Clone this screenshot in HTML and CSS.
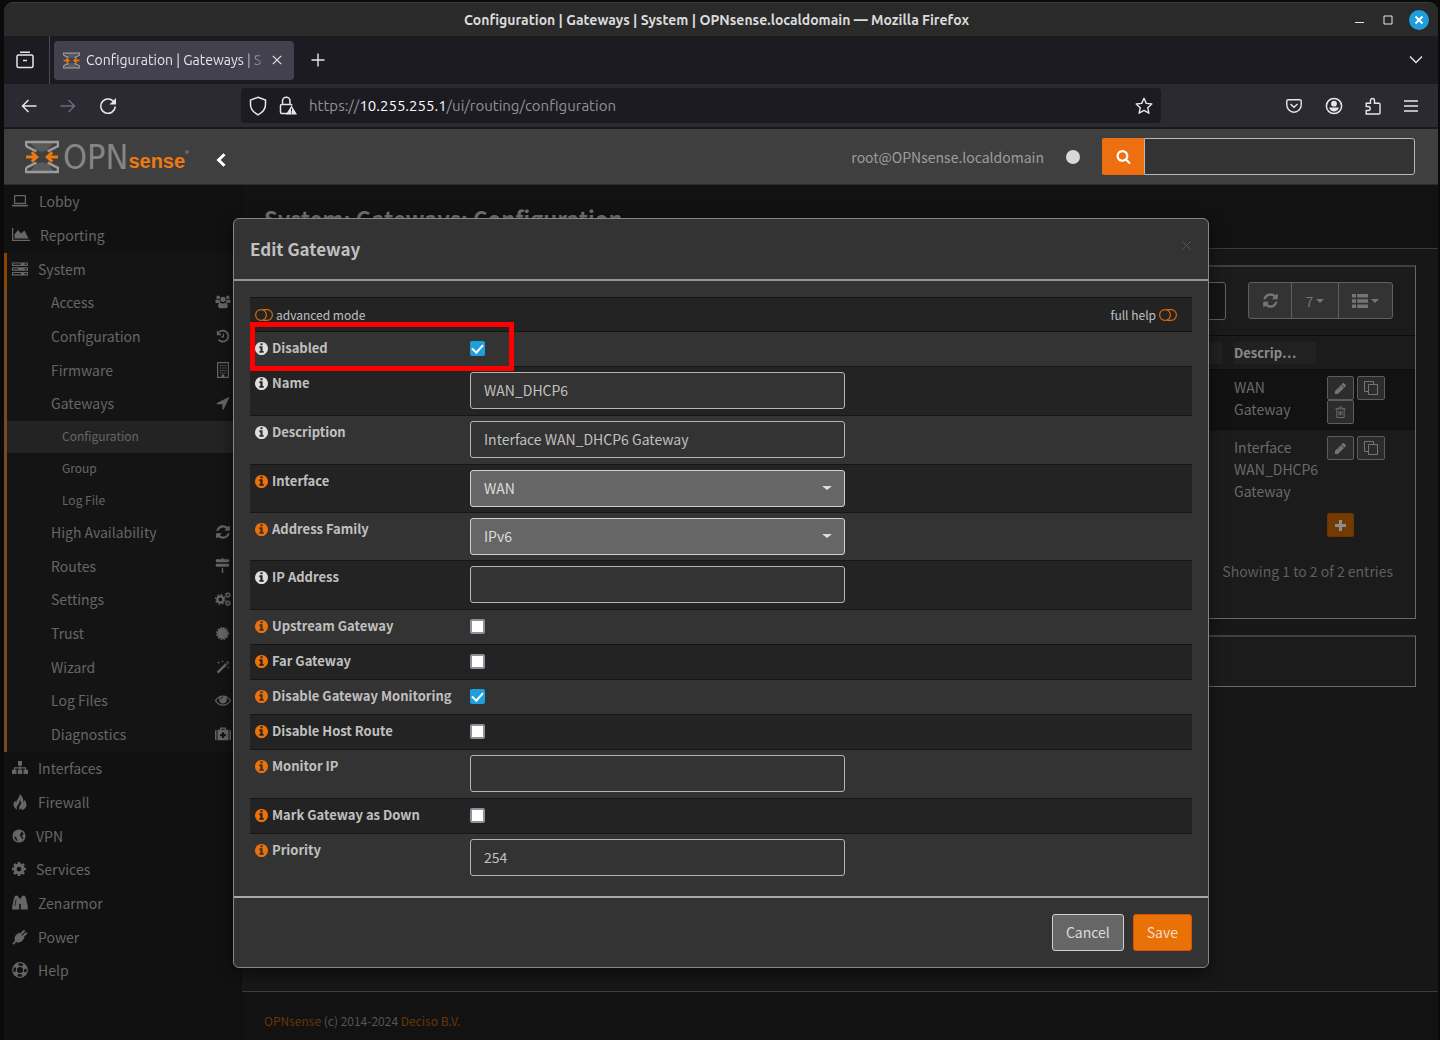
FILE: index.html
```html
<!DOCTYPE html>
<html lang="en">
<head>
<meta charset="utf-8">
<meta name="viewport" content="width=device-width, initial-scale=1">
<title>Configuration | Gateways | System | OPNsense.localdomain</title>
<link rel="stylesheet" href="styles.css">
</head>
<body>
<svg class="sprite" aria-hidden="true">
  <symbol id="i-refresh" viewBox="0 0 1792 1792"><path d="M1639 1056q0 5-1 7-64 268-268 434.5t-478 166.5q-146 0-282.5-55t-243.5-157l-129 129q-19 19-45 19t-45-19-19-45v-448q0-26 19-45t45-19h448q26 0 45 19t19 45-19 45l-137 137q71 66 161 102t187 36q134 0 250-65t186-179q11-17 53-117 8-23 30-23h192q13 0 22.5 9.5t9.5 22.5zm25-800v448q0 26-19 45t-45 19h-448q-26 0-45-19t-19-45 19-45l138-138q-148-137-349-137-134 0-250 65t-186 179q-11 17-53 117-8 23-30 23h-199q-13 0-22.5-9.5t-9.5-22.5v-7q65-268 270-434.5t480-166.5q146 0 284 55.5t245 156.5l130-129q19-19 45-19t45 19 19 45z"/></symbol>
  <symbol id="i-info" viewBox="128 128 1536 1536"><path d="M1152 1376v-160q0-14-9-23t-23-9h-96v-512q0-14-9-23t-23-9h-320q-14 0-23 9t-9 23v160q0 14 9 23t23 9h96v320h-96q-14 0-23 9t-9 23v160q0 14 9 23t23 9h448q14 0 23-9t9-23zm-128-896v-160q0-14-9-23t-23-9h-192q-14 0-23 9t-9 23v160q0 14 9 23t23 9h192q14 0 23-9t9-23zm640 416q0 209-103 385.5t-279.5 279.5-385.5 103-385.5-103-279.5-279.5-103-385.5 103-385.5 279.5-279.5 385.5-103 385.5 103 279.5 279.5 103 385.5z"/></symbol>
  <symbol id="i-arrow" viewBox="0 0 1792 1792"><path d="M1593 349l-640 1280q-17 35-57 35-5 0-15-2-22-5-35.5-22.5t-13.5-39.5v-576h-576q-22 0-39.5-13.5t-22.5-35.5 4-42 29-30l1280-640q13-7 29-7 27 0 45 19 15 14 18.5 34.5t-6.5 39.5z"/></symbol>
  <symbol id="i-search" viewBox="0 0 1792 1792"><path d="M1216 832q0-185-131.5-316.5t-316.5-131.5-316.5 131.5-131.5 316.5 131.5 316.5 316.5 131.5 316.5-131.5 131.5-316.5zm512 832q0 52-38 90t-90 38q-54 0-90-38l-343-342q-179 124-399 124-143 0-273.5-55.5t-225-150-150-225-55.5-273.5 55.5-273.5 150-225 225-150 273.5-55.5 273.5 55.5 225 150 150 225 55.5 273.5q0 220-124 399l343 343q37 37 37 90z"/></symbol>
  <symbol id="i-cog" viewBox="128 128 1536 1536"><path d="M1152 896q0-106-75-181t-181-75-181 75-75 181 75 181 181 75 181-75 75-181zm512-109v222q0 12-8 23t-20 13l-185 28q-19 54-39 91 35 50 107 138 10 12 10 25t-9 23q-27 37-99 108t-94 71q-12 0-26-9l-138-108q-44 23-91 38-16 136-29 186-7 28-36 28h-222q-14 0-24.5-8.5t-11.5-21.5l-28-184q-49-16-90-37l-141 107q-10 9-25 9-14 0-25-11-126-114-165-168-7-10-7-23 0-12 8-23 15-21 51-66.5t54-70.5q-27-50-41-99l-183-27q-13-2-21-12.5t-8-23.5v-222q0-12 8-23t19-13l186-28q14-46 39-92-40-57-107-138-10-12-10-24 0-10 9-23 26-36 98.5-107.5t94.5-71.5q13 0 26 10l138 107q44-23 91-38 16-136 29-186 7-28 36-28h222q14 0 24.5 8.5t11.5 21.5l28 184q49 16 90 37l142-107q9-9 24-9 13 0 25 10 129 119 165 170 7 8 7 22 0 12-8 23-15 21-51 66.5t-54 70.5q26 50 41 98l183 28q13 2 21 12.5t8 23.5z"/></symbol>
  <symbol id="i-eye" viewBox="0 0 1792 1792"><path d="M1664 960q-152-236-381-353 61 104 61 225 0 185-131.5 316.5t-316.5 131.5-316.5-131.5-131.5-316.5q0-121 61-225-229 117-381 353 133 205 333.5 326.5t434.5 121.5 434.5-121.5 333.5-326.5zm-720-384q0-20-14-34t-34-14q-125 0-214.5 89.5t-89.5 214.5q0 20 14 34t34 14 34-14 14-34q0-86 61-147t147-61q20 0 34-14t14-34zm848 384q0 34-20 69-140 230-376.5 368.5t-499.5 138.5-499.5-139-376.5-368q-20-35-20-69t20-69q140-229 376.5-368t499.5-139 499.5 139 376.5 368q20 35 20 69z"/></symbol>
  <symbol id="i-pencil" viewBox="0 0 1792 1792"><path d="M960 416l416 416-832 832h-416v-416zm683 96q0 53-37 90l-166 166-416-416 166-165q36-38 90-38 53 0 91 38l235 234q37 39 37 91z"/><path d="M910 640 480 1070" stroke="#2c2c2c" stroke-width="60"/></symbol>
  <symbol id="i-laptop" viewBox="0 0 16 16"><path d="M3 2h10a1 1 0 0 1 1 1v8H2V3a1 1 0 0 1 1-1zm.2 1.2v6.6h9.6V3.200zM0 11.800h16v.8q0 1-1.200 1H1.200q-1.200 0-1.200-1z" fill-rule="evenodd"/></symbol>
  <symbol id="i-chart" viewBox="0 0 18 16"><path d="M0 1h1.300v11.700H18V14H0zM2.500 11.500V7.300L6 3l3 3.500 3.500-3 4 8z"/></symbol>
  <symbol id="i-server" viewBox="0 0 16 16"><path d="M0 1.500h16v3.600H0zm1 1.100v1.200h8V2.600zm11.500 0v1.200H15V2.600zM0 6.200h16v3.600H0zm1 1.200v1.200h5V7.400zm11.500 0v1.200H15V7.400zM0 10.900h16v3.600H0zm1 1.200v1.200h8v-1.200zm11.500 0v1.200H15v-1.200z" fill-rule="evenodd"/></symbol>
  <symbol id="i-users" viewBox="0 0 18 16"><circle cx="3.600" cy="2.800" r="2"/><circle cx="14.400" cy="2.800" r="2"/><circle cx="9" cy="5" r="3"/><path d="M.5 9V6.500Q.7 5 2 5.200q2 1 3.200.3Q5.200 7 6 8.300 4.500 8.200 3.800 9zM17.500 9V6.500q-.2-1.500-1.500-1.300-2 1-3.200.3Q12.800 7 12 8.300q1.500-.1 2.200.7zM5.500 8.600Q9 10.800 12.500 8.600q1.800.3 2 4 0 2.400-2 2.400h-7q-2 0-2-2.400.2-3.700 2-4z"/></symbol>
  <symbol id="i-history" viewBox="0 0 16 16"><path d="M3.400 3.600A6.300 6.300 0 1 1 3 12.200" fill="none" stroke="currentColor" stroke-width="2"/><path d="M1 1.500V7h5.500z"/><path d="M8.500 5v4H6" fill="none" stroke="currentColor" stroke-width="1.200"/></symbol>
  <symbol id="i-building" viewBox="0 0 16 16"><path d="M2.600.6h10.800v14.800H2.600z" fill="none" stroke="currentColor" stroke-width="1.200"/><path d="M4.800 3.500h6.800M4.800 6h6.800M4.800 8.500h6.800M4.800 11h6.800" stroke="currentColor" stroke-width="1.200" stroke-dasharray="1.200 .6"/><path d="M6.600 12.500h2.800V15H6.600z"/></symbol>
  <symbol id="i-signs" viewBox="0 0 16 16"><path d="M7.200 0h1.600v1.300h5.400l1.500 1.500-1.500 1.700H1V1.300h6.200zM1.800 6H15v3.200H1.800L.3 7.600zM7.200 10.500h1.600V16H7.200z"/></symbol>
  <symbol id="i-cogs" viewBox="0 0 18 16"><circle cx="6" cy="8.500" r="3.400" fill="none" stroke="currentColor" stroke-width="2.600"/><circle cx="6" cy="8.500" r="5.300" fill="none" stroke="currentColor" stroke-width="1.600" stroke-dasharray="2.080 2.080"/><circle cx="14.500" cy="3.500" r="2" fill="none" stroke="currentColor" stroke-width="1.600"/><circle cx="14.500" cy="3.500" r="3" fill="none" stroke="currentColor" stroke-dasharray="1.600 1.540"/><circle cx="14.500" cy="12.800" r="2" fill="none" stroke="currentColor" stroke-width="1.600"/><circle cx="14.500" cy="12.800" r="3" fill="none" stroke="currentColor" stroke-dasharray="1.600 1.540"/></symbol>
  <symbol id="i-cert" viewBox="0 0 16 16"><circle cx="8" cy="8" r="5.800"/><circle cx="8" cy="8" r="6.200" fill="none" stroke="currentColor" stroke-width="1.400" stroke-dasharray="1.900 1.346"/></symbol>
  <symbol id="i-wand" viewBox="0 0 16 16"><path d="M.8 13.400 13.200 1l2 2L2.800 15.400zM10.800 4.700l.8.800L13.800 3.200l-.7-.8z" fill-rule="evenodd"/><path d="M3 1l.5 1.500L5 3l-1.500.5L3 5l-.5-1.500L1 3l1.500-.5zM7.500 0l.4 1.100L9 1.500l-1.100.4L7.500 3l-.4-1.100L6 1.500l1.100-.4zM14 7l.4 1.100 1.100.4-1.100.4L14 10l-.4-1.100-1.100-.4 1.100-.4z"/></symbol>
  <symbol id="i-medkit" viewBox="0 0 18 16"><path d="M0 5q0-1.700 1.700-1.700V15Q0 15 0 13.300zM18 5q0-1.700-1.700-1.700V15q1.700 0 1.700-1.700zM2.800 3.300h2.700V1.700q0-1 1-1h5q1 0 1 1v1.600h2.700V15H2.800zM7 2.200v1.100h4V2.200zm.8 3.800v2.100H5.700v2.400h2.100v2.100h2.400v-2.100h2.100V8.100h-2.100V6z" fill-rule="evenodd"/></symbol>
  <symbol id="i-sitemap" viewBox="0 0 16 16"><path d="M6 1h4v4.500H8.600v1.700h5.500v2.600H16V14h-4.500V9.800h1.400V8.400H8.600v1.400h1.600V14H5.800V9.800h1.600V8.400H3.100v1.400h1.400V14H0V9.800h1.900V7.200h5.500V5.500H6z"/></symbol>
  <symbol id="i-fire" viewBox="0 0 16 16"><path d="M7.500 0q.7 2.600-1.500 4.800-2 2.200-1.700 4Q3.500 8.500 3.300 6.500.8 9 1.500 11.500 2.300 14.500 5.500 16q-1.800-2.400.2-4.700Q8.300 8.200 7.300 6q3.500 2.200.3 6-1.500 2.400.2 4 .6-1.200 1.500-1.800.2 1 .3 1.800 4.500-.8 4.900-5 .2-3-2.300-5.500.2 2-.8 2.800Q11.500 2.500 7.500 0z"/></symbol>
  <symbol id="i-globe" viewBox="0 0 16 16"><path d="M8 .5a7.500 7.500 0 1 0 0 15 7.500 7.500 0 0 0 0-15zM10.700 3l1.800 1.200 1.200 2.300-1.200-.3-1 1 .4 2 1.300.6-1.500 2-1-2.500-1.700-2L9.800 5.200zM2.500 8l2.300 1.500 1 2.500.9 2Q3 12.500 2.500 8z" fill-rule="evenodd"/></symbol>
  <symbol id="i-binoc" viewBox="0 0 16 16"><path d="M2.800.8h3.400v1.700h1V14.500H.2v-3L2.200 2.500h.6zM9.800.8h3.400v1.700h.6l2 9v3H8.800V2.500h1zM3.800 4.200 2.400 11h.8L4.500 4.200z" fill-rule="evenodd"/><path d="M7 3.500h2V9H7z"/></symbol>
  <symbol id="i-plug" viewBox="0 0 16 16"><path d="M5 5l6 6q-3 3.700-6.700 2L1.500 15.800.2 14.500 3 11.700Q1.500 8 5 5zM6 4.500l1-.8 5.300 5.300-.8 1z"/><path d="M8.500 5.500 12 2M10.700 7.700l3.500-3.500" stroke="currentColor" stroke-width="2" stroke-linecap="round"/><path d="M5 5l2-1 5 5-1 2-3 1z"/></symbol>
  <symbol id="i-ring" viewBox="0 0 16 16"><circle cx="8" cy="8" r="7.300" fill="none" stroke="currentColor" stroke-width="1.200"/><circle cx="8" cy="8" r="3.600" fill="none" stroke="currentColor" stroke-width="1.200"/><circle cx="8" cy="8" r="5.500" fill="none" stroke="currentColor" stroke-width="3.400" stroke-dasharray="4.320 4.320" stroke-dashoffset="6.480"/></symbol>
  <symbol id="i-list" viewBox="0 0 16 14"><path d="M0 0h4v3.600H0zM5.200 0H16v3.600H5.200zM0 5.200h4v3.600H0zM5.200 5.200H16v3.600H5.200zM0 10.400h4V14H0zM5.200 10.400H16V14H5.200z"/></symbol>
  <symbol id="i-caret" viewBox="0 0 8 4"><path d="M0 0h8L4 4z"/></symbol>
  <symbol id="i-copy" viewBox="0 0 14 14"><path d="M4.500 3.500h9v10h-9zM4.500 10.500h-4v-10h9v3" fill="none" stroke="currentColor"/></symbol>
  <symbol id="i-trash" viewBox="0 0 12 14"><path d="M.5 3h11M4 3l.7-2h2.600L8 3M2 3v9.500h8V3M4.300 5.500V10M6 5.500V10M7.700 5.500V10" fill="none" stroke="currentColor"/></symbol>
  <symbol id="i-toggle" viewBox="0 0 18 12"><circle cx="6" cy="6" r="5.400" fill="none" stroke="currentColor" stroke-width="1.200"/><path d="M8 .6h4a5.400 5.400 0 0 1 0 10.800H8" fill="none" stroke="currentColor" stroke-width="1.200"/></symbol>
  <symbol id="i-mark" viewBox="0 0 33 33"><path d="M5 3h23L22 9q-5.500 5-11 0z" fill="#5a5a5a"/><path d="M10 24q6.500-5 13 0l5 6H5z" fill="#5a5a5a"/><path d="M1 6V2h31v4L22 11M1 6l10 5M1 27v4h31v-4l-10-5M1 27l10-5" fill="none" stroke="#9b9b9b" stroke-width="2.400"/><path d="M1 16.500h9M6.500 12l5 4.500-5 4.500M32 16.500h-9M26.500 12l-5 4.500 5 4.500" fill="none" stroke="#f0780f" stroke-width="2.800"/></symbol>
</svg>

<div class="window">
  <header class="titlebar">
    <h1 class="titlebar-text">Configuration | Gateways | System | OPNsense.localdomain — Mozilla Firefox</h1>
    <div class="window-buttons">
      <button class="chrome-btn win-btn" aria-label="Minimize"><svg width="10" height="10" viewBox="0 0 10 10"><path d="M1 7.500h9" stroke="currentColor"/></svg></button>
      <button class="chrome-btn win-btn" aria-label="Maximize"><svg width="10" height="10" viewBox="0 0 10 10"><path d="M1 1h8v8H1z" fill="none" stroke="currentColor"/></svg></button>
      <button class="chrome-btn win-close" aria-label="Close"><svg width="10" height="10" viewBox="0 0 10 10"><path d="M1.500 1.500l7 7M8.500 1.500l-7 7" stroke="currentColor" stroke-width="2"/></svg></button>
    </div>
  </header>

  <div class="tabbar">
    <button class="chrome-btn view-btn" aria-label="Firefox View"><svg width="18" height="18" viewBox="0 0 18 18" fill="none" stroke="currentColor" stroke-width="1.500"><path d="M4 1.200h10M2.500 4h13q1.500 0 1.500 1.500V15q0 1.500-1.500 1.500h-13Q1 16.500 1 15V5.500Q1 4 2.500 4zM7 9.500h4"/></svg></button>
    <div class="tab">
      <svg class="tab-icon" width="17" height="17"><use href="#i-mark"/></svg>
      <span class="tab-label">Configuration | Gateways | S</span>
      <button class="chrome-btn tab-close" aria-label="Close tab"><svg width="10" height="10" viewBox="0 0 10 10"><path d="M.8.8l8.400 8.400M9.200.8.8 9.200" stroke="currentColor" stroke-width="1.200"/></svg></button>
    </div>
    <button class="chrome-btn" aria-label="New tab"><svg width="14" height="14" viewBox="0 0 14 14"><path d="M7 .5v13M.5 7h13" stroke="currentColor" stroke-width="1.400"/></svg></button>
    <button class="chrome-btn tabs-menu" aria-label="List all tabs"><svg width="14" height="10" viewBox="0 0 14 10"><path d="M1 1.500l6 6 6-6" fill="none" stroke="currentColor" stroke-width="1.400"/></svg></button>
  </div>

  <div class="navbar">
    <div class="nav-left">
      <button class="chrome-btn" aria-label="Back"><svg width="16" height="14" viewBox="0 0 16 14"><path d="M15.500 7H1.500M7.500 1l-6 6 6 6" fill="none" stroke="currentColor" stroke-width="1.500"/></svg></button>
      <button class="chrome-btn is-off" aria-label="Forward"><svg width="16" height="14" viewBox="0 0 16 14"><path d="M.5 7h14M8.500 1l6 6-6 6" fill="none" stroke="currentColor" stroke-width="1.500"/></svg></button>
      <button class="chrome-btn" aria-label="Reload"><svg width="18" height="18" viewBox="0 0 18 18"><path d="M15.500 6A7.200 7.200 0 1 0 16.200 9.500" fill="none" stroke="currentColor" stroke-width="1.500"/><path d="M17 1v6.500h-6.500z" fill="currentColor"/></svg></button>
    </div>
    <div class="urlbar">
      <svg width="18" height="20" viewBox="0 0 18 20"><path d="M9 1.200 16.500 4v4.500q0 6.500-7.500 10.300Q1.500 15 1.500 8.500V4z" fill="none" stroke="currentColor" stroke-width="1.500"/></svg>
      <svg width="18" height="20" viewBox="0 0 18 20"><path d="M9 17.500H2.800Q1.500 17.500 1.500 16V9.500q0-1 1.300-1h9q1.200 0 1.200 1M3.500 8.500V5a3.700 3.700 0 0 1 7.500 0v3.500" fill="none" stroke="currentColor" stroke-width="1.500"/><path d="M12.500 9.500 18 18.500H7z" fill="currentColor"/><path d="M12.500 12.500v3M12.500 16.500v1" stroke="#1c1b22"/></svg>
      <p class="url">https://<span class="url-host">10.255.255.1</span>/ui/routing/configuration</p>
      <svg width="18" height="18" viewBox="0 0 18 18"><path d="M9 1.300l2.300 5.100 5.500.6-4.100 3.700 1.200 5.500L9 13.400l-4.900 2.800 1.200-5.500L1.200 7l5.500-.6z" fill="none" stroke="currentColor" stroke-width="1.400" stroke-linejoin="round"/></svg>
    </div>
    <div class="nav-right">
      <button class="chrome-btn" aria-label="Pocket"><svg width="16" height="16" viewBox="0 0 16 16" fill="none" stroke="currentColor" stroke-width="1.400"><path d="M2.200 1.700h11.600q1.400 0 1.400 1.300v4a7.200 7.200 0 0 1-14.400 0V3q0-1.300 1.400-1.300zM4.500 6 8 9.300 11.500 6"/></svg></button>
      <button class="chrome-btn" aria-label="Account"><svg width="18" height="18" viewBox="0 0 18 18"><circle cx="9" cy="9" r="7.600" fill="none" stroke="currentColor" stroke-width="1.500"/><circle cx="9" cy="6.700" r="2.900" fill="currentColor"/><path d="M4 10.500h10q-1.500 4-5 4t-5-4z" fill="currentColor"/></svg></button>
      <button class="chrome-btn" aria-label="Extensions"><svg width="16" height="18" viewBox="0 0 16 18"><path d="M1.200 9V6.200h4.300V3.500a2 2 0 0 1 4 0v2.700H14q1 0 1 1V16q0 1-1 1H1.200v-3.500h2a2 2 0 0 0 0-4h-2z" fill="none" stroke="currentColor" stroke-width="1.400"/></svg></button>
      <button class="chrome-btn" aria-label="Menu"><svg width="14" height="12" viewBox="0 0 14 12"><path d="M0 1h14M0 6h14M0 11h14" stroke="currentColor" stroke-width="1.400"/></svg></button>
    </div>
  </div>

  <div class="page">
    <header class="topbar">
      <a class="brand" href="#" aria-label="OPNsense"><svg width="34" height="34"><use href="#i-mark"/></svg><span class="brand-opn">OPN</span><span class="brand-sense">sense</span><span class="brand-dot"></span></a>
      <button class="collapse" aria-label="Collapse menu"><svg width="10" height="14" viewBox="0 0 10 14"><path d="M8.500 1.200 2.600 7l5.900 5.800" fill="none" stroke="currentColor" stroke-width="3"/></svg></button>
      <span class="user">root@OPNsense.localdomain</span>
      <span class="status"></span>
      <form class="topsearch">
        <button class="topsearch-btn" type="button" aria-label="Search"><svg class="ico" width="15" height="15"><use href="#i-search"/></svg></button>
        <input class="topsearch-input" type="text" aria-label="Search menu">
      </form>
    </header>

    <div class="body">
      <nav class="sidebar">
        <ul class="menu">
          <li><a class="item" href="#"><svg class="ico" width="16" height="16"><use href="#i-laptop"/></svg><span class="gap-l">Lobby</span></a></li>
          <li><a class="item" href="#"><svg class="ico" width="18" height="16"><use href="#i-chart"/></svg>Reporting</a></li>
          <li class="open"><a class="item item-open" href="#"><svg class="ico" width="16" height="16"><use href="#i-server"/></svg>System</a>
            <ul class="submenu">
              <li><a class="item" href="#">Access<svg class="ico" width="16" height="16"><use href="#i-users"/></svg></a></li>
              <li><a class="item" href="#">Configuration<svg class="ico" width="14" height="14"><use href="#i-history"/></svg></a></li>
              <li><a class="item" href="#">Firmware<svg class="ico" width="16" height="16"><use href="#i-building"/></svg></a></li>
              <li><a class="item" href="#">Gateways<svg class="ico" width="16" height="16"><use href="#i-arrow"/></svg></a>
                <ul class="leafmenu">
                  <li><a class="item leaf leaf-active" href="#">Configuration</a></li>
                  <li><a class="item leaf" href="#">Group</a></li>
                  <li><a class="item leaf" href="#">Log File</a></li>
                </ul>
              </li>
              <li><a class="item" href="#">High Availability<svg class="ico" width="16" height="16"><use href="#i-refresh"/></svg></a></li>
              <li><a class="item" href="#">Routes<svg class="ico" width="15" height="15"><use href="#i-signs"/></svg></a></li>
              <li><a class="item" href="#">Settings<svg class="ico" width="16" height="16"><use href="#i-cogs"/></svg></a></li>
              <li><a class="item" href="#">Trust<svg class="ico" width="15" height="15"><use href="#i-cert"/></svg></a></li>
              <li><a class="item" href="#">Wizard<svg class="ico" width="14" height="14"><use href="#i-wand"/></svg></a></li>
              <li><a class="item" href="#">Log Files<svg class="ico" width="16" height="16"><use href="#i-eye"/></svg></a></li>
              <li><a class="item" href="#">Diagnostics<svg class="ico" width="16" height="16"><use href="#i-medkit"/></svg></a></li>
            </ul>
          </li>
          <li><a class="item" href="#"><svg class="ico" width="16" height="16"><use href="#i-sitemap"/></svg>Interfaces</a></li>
          <li><a class="item" href="#"><svg class="ico" width="16" height="16"><use href="#i-fire"/></svg>Firewall</a></li>
          <li><a class="item" href="#"><svg class="ico" width="14" height="14"><use href="#i-globe"/></svg>VPN</a></li>
          <li><a class="item" href="#"><svg class="ico" width="14" height="14"><use href="#i-cog"/></svg>Services</a></li>
          <li><a class="item" href="#"><svg class="ico" width="16" height="16"><use href="#i-binoc"/></svg>Zenarmor</a></li>
          <li><a class="item" href="#"><svg class="ico" width="16" height="16"><use href="#i-plug"/></svg>Power</a></li>
          <li><a class="item" href="#"><svg class="ico" width="16" height="16"><use href="#i-ring"/></svg>Help</a></li>
        </ul>
      </nav>

      <main class="main">
        <div class="page-head"><h2 class="page-title">System: Gateways: Configuration</h2></div>
        <section class="panel">
          <div class="toolbar">
            <input class="grid-search" type="text" aria-label="Search gateways">
            <div class="btn-group">
              <button class="tool" aria-label="Refresh"><svg class="ico" width="17" height="17"><use href="#i-refresh"/></svg></button>
              <button class="tool">7<svg class="ico" width="8" height="4"><use href="#i-caret"/></svg></button>
              <button class="tool" aria-label="Columns"><svg class="ico" width="16" height="14"><use href="#i-list"/></svg><svg class="ico" width="8" height="4"><use href="#i-caret"/></svg></button>
            </div>
          </div>
          <table class="grid">
            <thead><tr><th class="c-rest"><span class="chip"></span></th><th class="c-desc"><span class="chip">Descrip…</span></th><th class="c-cmd"></th></tr></thead>
            <tbody>
              <tr class="dark"><td></td><td>WAN Gateway</td><td><div class="cmds">
                <button class="cmd" aria-label="Edit"><svg class="ico" width="13" height="13"><use href="#i-pencil"/></svg></button><button class="cmd" aria-label="Clone"><svg class="ico" width="14" height="14"><use href="#i-copy"/></svg></button><button class="cmd" aria-label="Delete"><svg class="ico" width="11" height="13"><use href="#i-trash"/></svg></button></div></td></tr>
              <tr><td></td><td>Interface WAN_DHCP6 Gateway</td><td><div class="cmds">
                <button class="cmd" aria-label="Edit"><svg class="ico" width="13" height="13"><use href="#i-pencil"/></svg></button><button class="cmd" aria-label="Clone"><svg class="ico" width="14" height="14"><use href="#i-copy"/></svg></button></div></td></tr>
              <tr class="add-row"><td></td><td></td><td><button class="cmd cmd-add" aria-label="Add"><svg width="11" height="11" viewBox="0 0 11 11"><path d="M5.500 0v11M0 5.500h11" stroke="currentColor" stroke-width="3"/></svg></button></td></tr>
            </tbody>
          </table>
          <p class="count">Showing 1 to 2 of 2 entries</p>
        </section>
        <section class="panel panel-empty"></section>
        <footer class="foot"><a href="#">OPNsense</a> (c) 2014-2024 <a href="#">Deciso B.V.</a></footer>
      </main>
    </div>

    <div class="overlay">
      <form class="modal" role="dialog" aria-label="Edit Gateway">
        <div class="modal-head"><h3 class="modal-title">Edit Gateway</h3><button class="modal-x" type="button" aria-label="Close"><svg width="9" height="9" viewBox="0 0 9 9"><path d="M.5.5l8 8M8.500.5l-8 8" stroke="currentColor"/></svg></button></div>
        <div class="modal-body">
          <div class="row row-top"><span class="mode"><svg class="tog" width="18" height="12"><use href="#i-toggle"/></svg>advanced mode</span><span class="mode">full help<svg class="tog" width="18" height="12"><use href="#i-toggle"/></svg></span></div>
          <div class="row row-check"><label class="lbl" for="f1"><svg class="ico" width="13" height="13"><use href="#i-info"/></svg>Disabled</label><input class="check" id="f1" type="checkbox" checked><span class="highlight"></span></div>
          <div class="row"><label class="lbl" for="f2"><svg class="ico" width="13" height="13"><use href="#i-info"/></svg>Name</label><input class="field" id="f2" type="text" value="WAN_DHCP6"></div>
          <div class="row"><label class="lbl" for="f3"><svg class="ico" width="13" height="13"><use href="#i-info"/></svg>Description</label><input class="field" id="f3" type="text" value="Interface WAN_DHCP6 Gateway"></div>
          <div class="row row-pick"><label class="lbl adv" for="f4"><svg class="ico" width="13" height="13"><use href="#i-info"/></svg>Interface</label><span class="pick"><select class="field" id="f4"><option>WAN</option></select></span></div>
          <div class="row row-pick"><label class="lbl adv" for="f5"><svg class="ico" width="13" height="13"><use href="#i-info"/></svg>Address Family</label><span class="pick"><select class="field" id="f5"><option>IPv6</option></select></span></div>
          <div class="row"><label class="lbl" for="f6"><svg class="ico" width="13" height="13"><use href="#i-info"/></svg>IP Address</label><input class="field" id="f6" type="text"></div>
          <div class="row row-check"><label class="lbl adv" for="f7"><svg class="ico" width="13" height="13"><use href="#i-info"/></svg>Upstream Gateway</label><input class="check" id="f7" type="checkbox"></div>
          <div class="row row-check"><label class="lbl adv" for="f8"><svg class="ico" width="13" height="13"><use href="#i-info"/></svg>Far Gateway</label><input class="check" id="f8" type="checkbox"></div>
          <div class="row row-check"><label class="lbl adv" for="f9"><svg class="ico" width="13" height="13"><use href="#i-info"/></svg>Disable Gateway Monitoring</label><input class="check" id="f9" type="checkbox" checked></div>
          <div class="row row-check"><label class="lbl adv" for="f10"><svg class="ico" width="13" height="13"><use href="#i-info"/></svg>Disable Host Route</label><input class="check" id="f10" type="checkbox"></div>
          <div class="row"><label class="lbl adv" for="f11"><svg class="ico" width="13" height="13"><use href="#i-info"/></svg>Monitor IP</label><input class="field" id="f11" type="text"></div>
          <div class="row row-check"><label class="lbl adv" for="f12"><svg class="ico" width="13" height="13"><use href="#i-info"/></svg>Mark Gateway as Down</label><input class="check" id="f12" type="checkbox"></div>
          <div class="row"><label class="lbl adv" for="f13"><svg class="ico" width="13" height="13"><use href="#i-info"/></svg>Priority</label><input class="field" id="f13" type="text" value="254"></div>
        </div>
        <div class="modal-foot"><button class="btn" type="button">Cancel</button><button class="btn btn-save" type="button">Save</button></div>
      </form>
    </div>
  </div>
</div>
</body>
</html>
```
FILE: styles.css
```css
* { box-sizing: border-box; }

body {
  margin: 0;
  background: #0a0a0a;
  font: 14px/22px "Noto Sans CJK JP", "Noto Sans", sans-serif;
  color: #6a6a6a;
}

h1, h2, h3, p, ul { margin: 0; padding: 0; }
ul { list-style: none; }
a { color: inherit; text-decoration: none; }
button, input, select { font: inherit; color: inherit; margin: 0; }
button { display: inline-flex; align-items: center; justify-content: center; padding: 0; border: 0; background: none; }
svg { display: block; flex: none; }
.sprite { position: absolute; width: 0; height: 0; }
.ico { fill: currentColor; }

/* Browser window */
.window {
  display: flex;
  flex-direction: column;
  min-height: 100vh;
  padding: 2px 2px 0 4px;
}
.titlebar, .tabbar, .navbar { font-family: Ubuntu, "Noto Sans", sans-serif; color: #e6e6ea; }
.titlebar {
  display: grid;
  grid-template-columns: 1fr auto 1fr;
  align-items: center;
  height: 34px;
  padding-right: 9px;
  border-radius: 9px 9px 0 0;
  border-top: 1px solid #3a3a3a;
  background: #2a2a2a;
}
.titlebar-text { grid-column: 2; font-size: 14px; line-height: 20px; font-weight: 600; color: #dadada; }
.window-buttons { display: flex; justify-content: flex-end; align-items: center; gap: 14px; }
.win-btn { width: 15px; }
.win-close { width: 20px; height: 20px; border-radius: 50%; background: #1f9ede; color: #fff; }

.tabbar { display: flex; align-items: center; height: 48px; padding-right: 15px; background: #1c1b22; }
.view-btn { width: 46px; height: 48px; border-right: 1px solid #4a4954; padding-right: 4px; }
.tab {
  display: flex;
  align-items: center;
  width: 240px;
  height: 39px;
  margin: 0 17px 0 4px;
  padding: 0 12px 0 9px;
  border-radius: 4px;
  background: #42414d;
}
.tab-label {
  flex: 1;
  margin: 0 2px 0 6px;
  white-space: nowrap;
  -webkit-mask-image: linear-gradient(to left, transparent, #000 30px);
  mask-image: linear-gradient(to left, transparent, #000 30px);
}
.tabs-menu { margin-left: auto; }

.navbar {
  display: flex;
  align-items: center;
  height: 45px;
  padding-right: 20px;
  border-bottom: 2px solid #19181d;
  background: #2b2a33;
}
.nav-left { display: flex; gap: 23px; width: 237px; padding-left: 17px; }
.is-off { color: #6b6a75; }
.urlbar {
  flex: 1;
  display: flex;
  align-items: center;
  gap: 12px;
  height: 35px;
  padding: 0 8px;
  border-radius: 4px;
  background: #1c1b22;
}
.url { flex: 1; font-size: 15px; color: #92919a; }
.url-host { color: #fbfbfe; }
.nav-right { display: flex; align-items: center; justify-content: space-between; width: 257px; padding-left: 125px; }

/* OPNsense page */
.page { position: relative; flex: 1; display: flex; flex-direction: column; }
.topbar {
  display: flex;
  align-items: center;
  height: 56px;
  padding: 0 23px 0 21px;
  border-bottom: 1px solid #2c2c2c;
  background: #3f3f3f;
  color: #9d9d9d;
}
.brand { display: flex; align-items: center; width: 166px; }
.brand-opn { margin-left: 4px; font: 34px/34px "DejaVu Sans Condensed", "Liberation Sans", sans-serif; color: #858585; }
.brand-sense { align-self: flex-end; font: bold 20px/26px "Liberation Sans", sans-serif; color: #f0780f; }
.brand-dot { align-self: flex-start; width: 4px; height: 4px; margin-top: 10px; border-radius: 50%; background: #666; }
.collapse { margin: 6px 0 0 25px; color: #fff; }
.user { margin-left: auto; }
.status { width: 14px; height: 14px; margin: 0 22px; border-radius: 50%; background: #d8d8d8; }
.topsearch { display: flex; height: 37px; }
.topsearch-btn { width: 42px; border-radius: 2px 0 0 2px; background: #ee6f12; color: #fff; }
.topsearch-input { width: 271px; border: 1px solid #b8b8b8; border-radius: 0 3px 3px 0; background: #333; }

.body { flex: 1; display: grid; grid-template-columns: 238px 1fr; }

/* Navigation: every third row is a pixel shorter */
.sidebar { border-right: 1px solid #0e0e0e; background: #111; color: #666; }
.menu > li > .item { height: 34px; }
.submenu > li > .item { height: 34px; padding: 0 11px 2px 44px; justify-content: space-between; }
.menu > li:nth-child(3n) > .item, .submenu > li:nth-child(3n) > .item { height: 33px; }
.item { display: flex; align-items: center; gap: 10px; padding: 0 0 2px 8px; }
.gap-l { margin-left: 1px; }
.open { background: #141414; }
.item-open { padding-left: 5px; border-left: 3px solid #8a4500; }
.submenu { border-left: 3px solid #774a24; }
.submenu .ico { margin: 0 -1px; }
.submenu .ico[width="14"], .submenu .ico[width="15"] { margin: 0; }
.leafmenu > li > .leaf { height: 32px; padding-left: 55px; font-size: 12px; }
.leafmenu > li:nth-child(3n) > .leaf { height: 31px; }
.leaf-active { background: #232323; }

/* Content behind the dialog */
.main { display: flex; flex-direction: column; background: #171717; }
.page-head { height: 64px; padding: 19px 22px 0; border-bottom: 1px solid #3c3c3c; background: #121212; }
.page-title { font-size: 22px; line-height: 28px; font-weight: 700; color: #707070; }
.panel { margin: 16px 22px 0; border: 1px solid #696969; border-top: 2px solid #404040; background: #1b1b1b; }
.panel-empty { height: 52px; }
.toolbar { display: flex; justify-content: flex-end; gap: 22px; padding: 15px 22px; }
.grid-search { width: 240px; height: 38px; border: 1px solid #606060; border-radius: 3px; background: #161616; }
.btn-group { display: flex; height: 37px; border: 1px solid #606060; border-radius: 3px; background: #333; color: #757575; }
.tool { gap: 3px; width: 42px; }
.tool + .tool { width: 47px; border-left: 1px solid #606060; }
.tool + .tool + .tool { width: 54px; }
.grid { width: 100%; table-layout: fixed; border-collapse: collapse; }
.grid th, .grid td { padding: 6px 6px 5px; border-top: 1px solid #0c0c0c; text-align: left; vertical-align: top; }
.grid .c-rest { text-align: right; }
.grid .add-row td { border-top: 0; }
.c-desc { width: 94px; font-size: 13px; font-weight: 700; color: #8a8a8a; }
.c-cmd { width: 93px; }
.chip { display: block; height: 22px; background: #212121; line-height: 22px; }
.dark { background: #121212; }
.grid td:last-child { padding-left: 5px; }
.cmds { display: flex; flex-wrap: wrap; gap: 0 3px; width: 60px; }
.cmd { width: 27px; height: 24px; border: 1px solid #5c5c5c; border-radius: 2px; background: #2c2c2c; color: #757575; }
.cmd + .cmd { width: 28px; }
.cmd + .cmd + .cmd { width: 27px; }
.cmd-add { border-color: #6b3300; background: #743a04; color: #8c8c8c; }
.count { padding: 18px 22px 36px; text-align: right; color: #5f5f5f; }
.foot { margin-top: auto; padding: 18px 22px 8px; border-top: 1px solid #3c3c3c; background: #121212; font-size: 12px; color: #555; }
.foot a { color: #6b3606; }

/* Edit dialog */
.overlay { position: absolute; inset: 0; padding-top: 89px; }
.modal {
  width: calc(100% - 457px);
  max-width: 976px;
  margin: 0 auto;
  border: 1px solid #868686;
  border-radius: 6px;
  background: #333;
  color: #c0c0c0;
  box-shadow: 0 5px 15px rgba(0, 0, 0, .5);
}
.modal-head { display: flex; justify-content: space-between; padding: 18px 17px 18px 16px; border-bottom: 2px solid #959595; }
.modal-title { font-size: 17px; line-height: 24px; font-weight: 700; }
.modal-x { width: 9px; height: 9px; margin-top: 4px; color: #555; }
.modal-body { padding: 16px 16px 14px; }
.row {
  position: relative;
  display: grid;
  grid-template-columns: 220px minmax(0, 375px);
  align-items: start;
  height: 49px;
  padding-top: 5px;
  border-top: 1px solid #161616;
}
.row:nth-child(odd) { background: #232323; }
.row-top { display: flex; justify-content: space-between; height: 34px; padding: 6px 15px 0 5px; font-size: 12px; }
.row-check { height: 35px; }
.row-pick { height: 48px; }
.mode { display: flex; align-items: center; gap: 3px; }
.tog { color: #d9690c; }
.lbl { display: flex; align-items: center; gap: 4px; padding-left: 5px; font-size: 13px; font-weight: 700; }
.lbl .ico { color: #dedede; }
.lbl.adv .ico { color: #ec7109; }
.field { display: block; width: 100%; height: 37px; padding: 0 13px 2px; border: 1px solid #b5b5b5; border-radius: 3px; background: #333; }
.pick { position: relative; display: block; }
.pick::after {
  content: "";
  position: absolute;
  top: 16px;
  right: 13px;
  border: 5px solid transparent;
  border-top: 4px solid #ddd;
  border-bottom: 0;
  pointer-events: none;
}
.pick .field { appearance: none; background: #666; color: #dcdcdc; border-color: #d0d0d0; }
.check {
  appearance: none;
  display: grid;
  place-items: center;
  width: 15px;
  height: 15px;
  margin-top: 4px;
  border: 2px solid #8f8f9d;
  border-radius: 2px;
  background: #fff;
}
.check:checked { border-color: #1f9ede; background: #1f9ede; }
.check:checked::after { content: ""; width: 9px; height: 5px; margin-bottom: 3px; border: solid #fff; border-width: 0 0 2px 2px; transform: rotate(-48deg); }
.highlight { position: absolute; top: -10px; left: 0; width: 264px; height: 49px; border: 5px solid #f00; z-index: 1; }
.modal-foot { display: flex; justify-content: flex-end; gap: 9px; padding: 16px; border-top: 2px solid #a8a8a8; }
.btn { height: 37px; padding: 0 13px 2px; border: 1px solid #cfcfcf; border-radius: 3px; background: #666; color: #dcdcdc; }
.btn-save { border-color: #d4550a; background: #ea7105; color: #f5dcc4; }
```
